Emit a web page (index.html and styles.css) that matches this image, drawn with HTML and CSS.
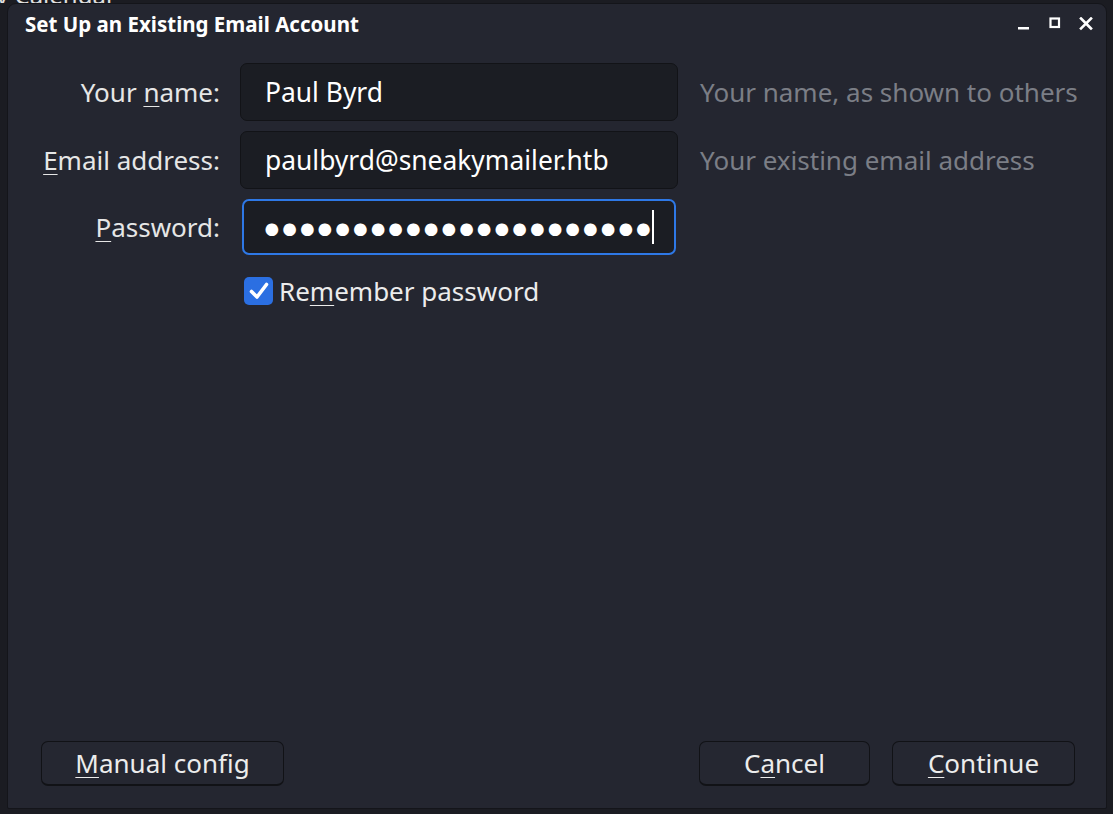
FILE: index.html
```html
<!DOCTYPE html>
<html>
<head>
<meta charset="utf-8">
<link rel="stylesheet" href="styles.css">
</head>
<body>
<div class="backdrop"><span class="backdrop-text">y Calendar</span></div>
<div class="window">
  <div class="titlebar">
    <div class="title">Set Up an Existing Email Account</div>
    <div class="controls">
      <svg class="ctl" width="14" height="14" viewBox="0 0 14 14"><rect x="1" y="10" width="11" height="2.5" fill="#fff"/></svg>
      <svg class="ctl" width="14" height="14" viewBox="0 0 14 14"><rect x="2.5" y="1.5" width="8.5" height="8.5" fill="none" stroke="#fff" stroke-width="2.2"/></svg>
      <svg class="ctl" width="14" height="14" viewBox="0 0 14 14"><path d="M2 1.5 L12 11.5 M12 1.5 L2 11.5" stroke="#fff" stroke-width="2.6" stroke-linecap="square"/></svg>
    </div>
  </div>
  <div class="content">
    <div class="form">
      <label class="lbl">Your <u>n</u>ame:</label>
      <div class="input">Paul Byrd</div>
      <div class="hint">Your name, as shown to others</div>

      <label class="lbl"><u>E</u>mail address:</label>
      <div class="input">paulbyrd@sneakymailer.htb</div>
      <div class="hint">Your existing email address</div>

      <label class="lbl"><u>P</u>assword:</label>
      <div class="input focused"><span class="dots">●●●●●●●●●●●●●●●●●●●●●●</span><span class="caret"></span></div>
      <div class="hint"></div>

      <div></div>
      <div class="check-row">
        <span class="checkbox"><svg width="22" height="22" viewBox="0 0 22 22"><path d="M3.5 11.5 L9 17 L18.5 4.5" fill="none" stroke="#fff" stroke-width="3.6" stroke-linecap="round" stroke-linejoin="round"/></svg></span>
        <span class="check-label">Re<u>m</u>ember password</span>
      </div>
      <div></div>
    </div>
    <div class="buttons">
      <button class="btn manual"><u>M</u>anual config</button>
      <div class="right-btns">
        <button class="btn cancel">C<u>a</u>ncel</button>
        <button class="btn continue"><u>C</u>ontinue</button>
      </div>
    </div>
  </div>
</div>
</body>
</html>
```
FILE: styles.css
```css
html, body {
  margin: 0;
  padding: 0;
  height: 100%;
}
body {
  background: #1b1c22;
  font-family: "Noto Sans", "Open Sans", sans-serif;
  color: #f2f2f2;
  overflow: hidden;
  position: relative;
}
.backdrop {
  height: 3px;
  overflow: hidden;
  position: relative;
}
.backdrop-text {
  position: absolute;
  left: -4px;
  top: -17px;
  font-size: 24px;
  line-height: 24px;
  color: #e0e0e0;
}
.window {
  position: absolute;
  left: 7px;
  top: 3px;
  right: 6px;
  bottom: 5px;
  background: #242630;
  border: 1px solid #14151a;
  border-radius: 9px 9px 2px 2px;
  display: flex;
  flex-direction: column;
  box-sizing: border-box;
}
.titlebar {
  height: 40px;
  display: flex;
  align-items: center;
  justify-content: space-between;
  padding: 0 13px 0 17px;
}
.title {
  font-weight: 700;
  font-size: 20.5px;
  color: #ffffff;
}
.controls {
  display: flex;
  gap: 17px;
  align-items: center;
}
.content {
  flex: 1;
  display: flex;
  flex-direction: column;
  justify-content: space-between;
  padding: 19px 31px 22px 33px;
}
.form {
  display: grid;
  grid-template-columns: 179px 438px 1fr;
  column-gap: 20px;
  row-gap: 10px;
  align-items: center;
}
.lbl {
  text-align: right;
  font-size: 26px;
  color: #e6e6e6;
}
u {
  text-decoration-thickness: 1px;
  text-underline-offset: 4px;
}
.input {
  height: 58px;
  box-sizing: border-box;
  background: #1b1d23;
  border: 1px solid #121317;
  border-radius: 7px;
  padding: 0 24px;
  display: flex;
  align-items: center;
  font-size: 26.4px;
  color: #ffffff;
}
.input.focused {
  border: 2px solid #2e78e6;
  height: 56px;
  margin: 0 2px 0 2px;
  padding: 0 10px 0 19px;
  overflow: hidden;
}
.dots {
  flex-shrink: 0;
  white-space: nowrap;
  font-size: 29.3px;
  line-height: 30px;
  letter-spacing: 0;
  color: #ffffff;
}
.caret {
  flex-shrink: 0;
  width: 2px;
  height: 34px;
  background: #ffffff;
  margin-left: 0;
}
.hint {
  padding-left: 2px;
  font-size: 26px;
  color: #7b7e86;
  white-space: nowrap;
}
.check-row {
  display: flex;
  align-items: center;
  gap: 6px;
  padding-left: 4px;
  margin-top: 8px;
}
.checkbox {
  width: 29px;
  height: 28px;
  background: #2b6fe2;
  border-radius: 5px;
  display: flex;
  align-items: center;
  justify-content: center;
}
.check-label {
  font-size: 26px;
  color: #ececec;
}
.buttons {
  display: flex;
  justify-content: space-between;
  align-items: center;
}
.right-btns {
  display: flex;
  gap: 22px;
}
.btn {
  font-family: inherit;
  font-size: 26px;
  color: #ececec;
  background: #252731;
  border: 1px solid #111216;
  border-bottom-width: 2px;
  border-radius: 7px;
  height: 45px;
  padding: 0;
  cursor: default;
}
.manual { width: 243px; }
.cancel { width: 171px; }
.continue { width: 183px; }
```
